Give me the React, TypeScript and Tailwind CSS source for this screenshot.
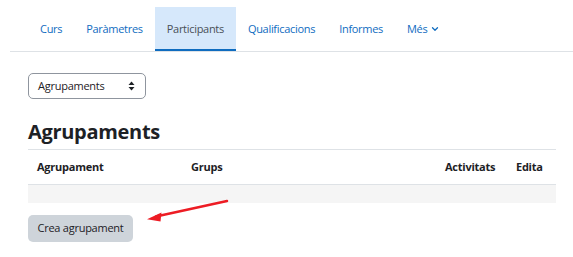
import React from 'react';
import { ChevronDown } from 'lucide-react';

const TABS = ['Curs', 'Paràmetres', 'Participants', 'Qualificacions', 'Informes'];
const ACTIVE = 'Participants';

function SortArrows() {
  return (
    <svg width="7" height="10" viewBox="0 0 7 10" className="text-[#1d2125]">
      <path d="M3.5 0.5 L6.5 4 H0.5 Z" fill="currentColor" />
      <path d="M3.5 9.5 L6.5 6 H0.5 Z" fill="currentColor" />
    </svg>
  );
}

export default function App() {
  return (
    <div className="relative h-[257px] w-[573px] overflow-hidden bg-white font-['Open_Sans',_'Noto_Sans',_sans-serif] tracking-[-0.25px] text-[#1d2125]">
      {/* Secondary navigation */}
      <nav className="ml-[10px] mt-[7px] flex h-[45px] items-stretch border-b border-[#dee2e6] pl-[18px] text-[11px] tracking-[-0.3px]">
        {TABS.map((tab) => {
          const active = tab === ACTIVE;
          return (
            <div
              key={tab}
              className={`flex items-center px-[12px] ${
                active
                  ? 'border-b-2 border-[#0f6cbf] bg-[#d6e8fb] pt-[2px] text-[#495057]'
                  : 'text-[#0f6cbf]'
              }`}
            >
              {tab}
            </div>
          );
        })}
        <div className="flex items-center gap-[3px] px-[12px] text-[#0f6cbf]">
          Més
          <ChevronDown className="h-[10px] w-[10px]" strokeWidth={3} />
        </div>
      </nav>

      <main className="px-[28px] pt-[21px]">
        <div className="flex h-[26px] w-[118px] items-center justify-between rounded-[5px] border border-[#8f959e] pl-[9px] pr-[10px] text-[11px]">
          <span>Agrupaments</span>
          <SortArrows />
        </div>

        <h2 className="mt-[18px] text-[20px] font-bold leading-[30px] tracking-[-0.3px]">Agrupaments</h2>

        <table className="mt-[2px] w-[528px] text-[11px]">
          <thead>
            <tr className="h-[35px] border-y border-[#dee2e6] font-bold">
              <th className="w-[163px] pl-[9px] text-left">Agrupament</th>
              <th className="text-left">Grups</th>
              <th className="w-[71px] text-left">Activitats</th>
              <th className="w-[40px] text-left">Edita</th>
            </tr>
          </thead>
          <tbody>
            <tr className="h-[18px] bg-[#f5f5f5]">
              <td colSpan={4} />
            </tr>
          </tbody>
        </table>

        <button className="mt-[12px] h-[27px] w-[105px] rounded-[5px] bg-[#ced4da] text-[11px] text-[#1d2125]">
          Crea agrupament
        </button>
      </main>

      {/* Annotation arrow */}
      <svg className="absolute left-0 top-0" width="573" height="257" viewBox="0 0 573 257">
        <line x1="227" y1="201" x2="156" y2="216.5" stroke="#ed1c24" strokeWidth="2.5" strokeLinecap="round" />
        <path d="M147 219.3 L161.5 212.5 L160.5 221.5 Z" fill="#ed1c24" />
      </svg>
    </div>
  );
}
